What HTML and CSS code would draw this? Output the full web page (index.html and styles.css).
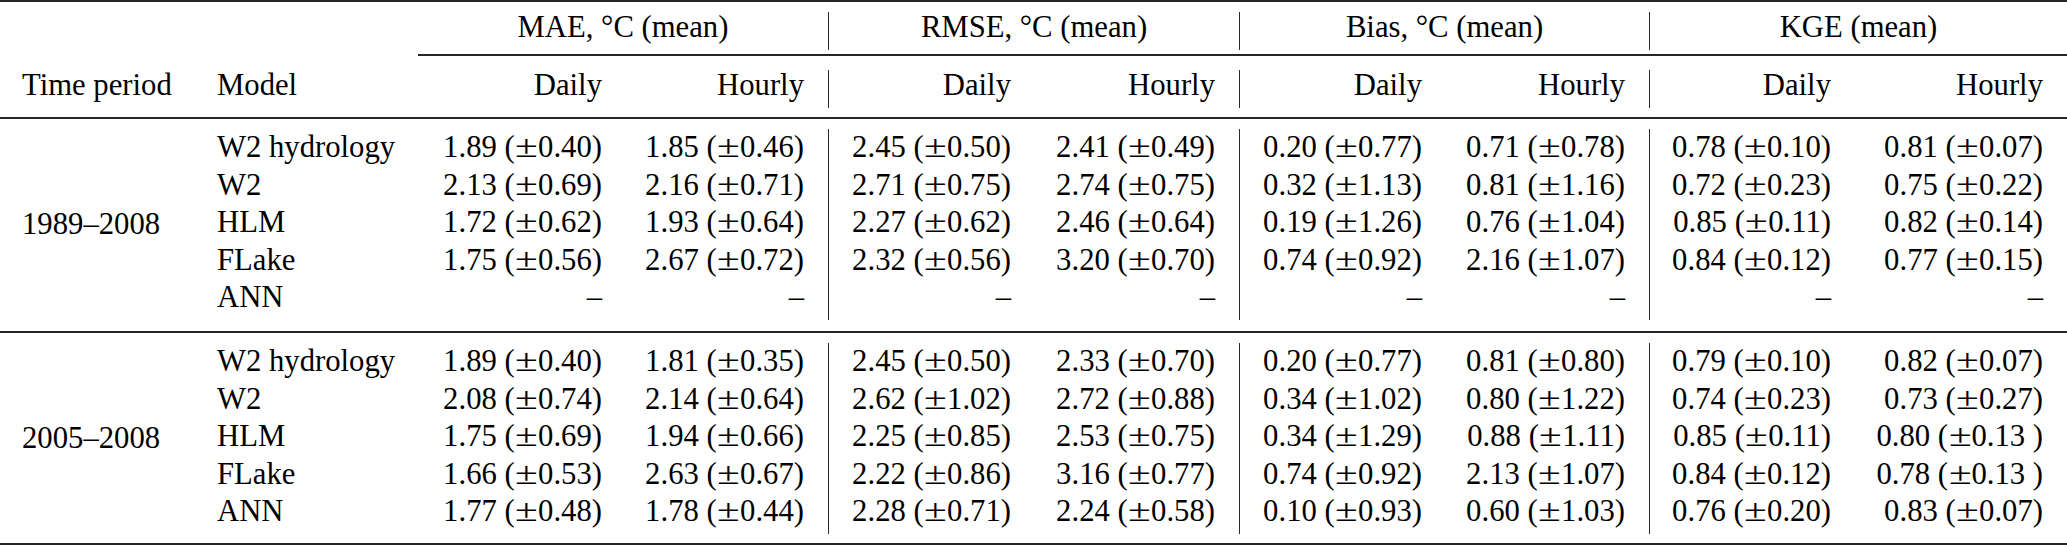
FILE: index.html
```html
<!DOCTYPE html>
<html lang="en">
<head>
<meta charset="utf-8">
<title>Model performance table</title>
<link rel="stylesheet" href="styles.css">
</head>
<body>
<div class="tbl">
  <div class="rule rule-top"></div>

  <div class="gh gh-blank"></div>
  <div class="gh">MAE, °C (mean)</div>
  <div class="gh bar">RMSE, °C (mean)</div>
  <div class="gh bar">Bias, °C (mean)</div>
  <div class="gh bar">KGE (mean)</div>

  <div class="rule rule-group"></div>

  <div class="sh lt">Time period</div>
  <div class="sh lt">Model</div>
  <div class="sh">Daily</div>
  <div class="sh hr">Hourly</div>
  <div class="sh bar">Daily</div>
  <div class="sh hr">Hourly</div>
  <div class="sh bar">Daily</div>
  <div class="sh hr">Hourly</div>
  <div class="sh bar">Daily</div>
  <div class="sh hr">Hourly</div>

  <div class="rule rule-mid"></div>

  <!-- Block 1 -->
  <div class="period">1989–2008</div>
  <div class="c lt">W2 hydrology</div>
  <div class="c">1.89 (<span class="pm">±</span>0.40)</div>
  <div class="c hr">1.85 (<span class="pm">±</span>0.46)</div>
  <div class="c bar">2.45 (<span class="pm">±</span>0.50)</div>
  <div class="c hr">2.41 (<span class="pm">±</span>0.49)</div>
  <div class="c bar">0.20 (<span class="pm">±</span>0.77)</div>
  <div class="c hr">0.71 (<span class="pm">±</span>0.78)</div>
  <div class="c bar">0.78 (<span class="pm">±</span>0.10)</div>
  <div class="c hr">0.81 (<span class="pm">±</span>0.07)</div>

  <div class="c lt">W2</div>
  <div class="c">2.13 (<span class="pm">±</span>0.69)</div>
  <div class="c hr">2.16 (<span class="pm">±</span>0.71)</div>
  <div class="c bar">2.71 (<span class="pm">±</span>0.75)</div>
  <div class="c hr">2.74 (<span class="pm">±</span>0.75)</div>
  <div class="c bar">0.32 (<span class="pm">±</span>1.13)</div>
  <div class="c hr">0.81 (<span class="pm">±</span>1.16)</div>
  <div class="c bar">0.72 (<span class="pm">±</span>0.23)</div>
  <div class="c hr">0.75 (<span class="pm">±</span>0.22)</div>

  <div class="c lt">HLM</div>
  <div class="c">1.72 (<span class="pm">±</span>0.62)</div>
  <div class="c hr">1.93 (<span class="pm">±</span>0.64)</div>
  <div class="c bar">2.27 (<span class="pm">±</span>0.62)</div>
  <div class="c hr">2.46 (<span class="pm">±</span>0.64)</div>
  <div class="c bar">0.19 (<span class="pm">±</span>1.26)</div>
  <div class="c hr">0.76 (<span class="pm">±</span>1.04)</div>
  <div class="c bar">0.85 (<span class="pm">±</span>0.11)</div>
  <div class="c hr">0.82 (<span class="pm">±</span>0.14)</div>

  <div class="c lt">FLake</div>
  <div class="c">1.75 (<span class="pm">±</span>0.56)</div>
  <div class="c hr">2.67 (<span class="pm">±</span>0.72)</div>
  <div class="c bar">2.32 (<span class="pm">±</span>0.56)</div>
  <div class="c hr">3.20 (<span class="pm">±</span>0.70)</div>
  <div class="c bar">0.74 (<span class="pm">±</span>0.92)</div>
  <div class="c hr">2.16 (<span class="pm">±</span>1.07)</div>
  <div class="c bar">0.84 (<span class="pm">±</span>0.12)</div>
  <div class="c hr">0.77 (<span class="pm">±</span>0.15)</div>

  <div class="c lt last">ANN</div>
  <div class="c last">–</div>
  <div class="c hr last">–</div>
  <div class="c bar last">–</div>
  <div class="c hr last">–</div>
  <div class="c bar last">–</div>
  <div class="c hr last">–</div>
  <div class="c bar last">–</div>
  <div class="c hr last">–</div>

  <div class="rule rule-sep"></div>

  <!-- Block 2 -->
  <div class="period">2005–2008</div>
  <div class="c lt">W2 hydrology</div>
  <div class="c">1.89 (<span class="pm">±</span>0.40)</div>
  <div class="c hr">1.81 (<span class="pm">±</span>0.35)</div>
  <div class="c bar">2.45 (<span class="pm">±</span>0.50)</div>
  <div class="c hr">2.33 (<span class="pm">±</span>0.70)</div>
  <div class="c bar">0.20 (<span class="pm">±</span>0.77)</div>
  <div class="c hr">0.81 (<span class="pm">±</span>0.80)</div>
  <div class="c bar">0.79 (<span class="pm">±</span>0.10)</div>
  <div class="c hr">0.82 (<span class="pm">±</span>0.07)</div>

  <div class="c lt">W2</div>
  <div class="c">2.08 (<span class="pm">±</span>0.74)</div>
  <div class="c hr">2.14 (<span class="pm">±</span>0.64)</div>
  <div class="c bar">2.62 (<span class="pm">±</span>1.02)</div>
  <div class="c hr">2.72 (<span class="pm">±</span>0.88)</div>
  <div class="c bar">0.34 (<span class="pm">±</span>1.02)</div>
  <div class="c hr">0.80 (<span class="pm">±</span>1.22)</div>
  <div class="c bar">0.74 (<span class="pm">±</span>0.23)</div>
  <div class="c hr">0.73 (<span class="pm">±</span>0.27)</div>

  <div class="c lt">HLM</div>
  <div class="c">1.75 (<span class="pm">±</span>0.69)</div>
  <div class="c hr">1.94 (<span class="pm">±</span>0.66)</div>
  <div class="c bar">2.25 (<span class="pm">±</span>0.85)</div>
  <div class="c hr">2.53 (<span class="pm">±</span>0.75)</div>
  <div class="c bar">0.34 (<span class="pm">±</span>1.29)</div>
  <div class="c hr">0.88 (<span class="pm">±</span>1.11)</div>
  <div class="c bar">0.85 (<span class="pm">±</span>0.11)</div>
  <div class="c hr">0.80 (<span class="pm">±</span>0.13 )</div>

  <div class="c lt">FLake</div>
  <div class="c">1.66 (<span class="pm">±</span>0.53)</div>
  <div class="c hr">2.63 (<span class="pm">±</span>0.67)</div>
  <div class="c bar">2.22 (<span class="pm">±</span>0.86)</div>
  <div class="c hr">3.16 (<span class="pm">±</span>0.77)</div>
  <div class="c bar">0.74 (<span class="pm">±</span>0.92)</div>
  <div class="c hr">2.13 (<span class="pm">±</span>1.07)</div>
  <div class="c bar">0.84 (<span class="pm">±</span>0.12)</div>
  <div class="c hr">0.78 (<span class="pm">±</span>0.13 )</div>

  <div class="c lt last">ANN</div>
  <div class="c last">1.77 (<span class="pm">±</span>0.48)</div>
  <div class="c hr last">1.78 (<span class="pm">±</span>0.44)</div>
  <div class="c bar last">2.28 (<span class="pm">±</span>0.71)</div>
  <div class="c hr last">2.24 (<span class="pm">±</span>0.58)</div>
  <div class="c bar last">0.10 (<span class="pm">±</span>0.93)</div>
  <div class="c hr last">0.60 (<span class="pm">±</span>1.03)</div>
  <div class="c bar last">0.76 (<span class="pm">±</span>0.20)</div>
  <div class="c hr last">0.83 (<span class="pm">±</span>0.07)</div>

  <div class="rule rule-bottom"></div>
</div>
</body>
</html>
```

FILE: styles.css
```css
html, body {
  margin: 0;
  padding: 0;
  background: #ffffff;
}

body {
  font-family: "Liberation Serif", "Times New Roman", serif;
  font-size: 30.7px;
  color: #000000;
}

.tbl {
  display: grid;
  grid-template-columns: 195px 223px 206px 204px 205px 206px 205px 205px 204px 214px;
  width: 2067px;
}

.tbl > div {
  box-sizing: border-box;
  white-space: nowrap;
}

/* horizontal rules */
.rule {
  grid-column: 1 / -1;
  height: 2px;
  background: #262626;
}

.rule-top {
  margin-bottom: 10px;
}

.rule-group {
  grid-column: 3 / -1;
  margin-top: 4px;
  margin-bottom: 14px;
}

.rule-mid {
  margin-top: 9px;
  margin-bottom: 10px;
}

.rule-sep {
  margin-top: 11.5px;
  margin-bottom: 10px;
}

.rule-bottom {
  margin-top: 9.5px;
}

/* vertical separators */
.bar {
  border-left: 1.5px solid #2a2a2a;
}

/* group header */
.gh {
  grid-column: span 2;
  text-align: center;
  line-height: 30px;
  padding-bottom: 8px;
}

/* sub header */
.sh {
  line-height: 30px;
  padding-bottom: 8px;
  text-align: right;
  padding-right: 22px;
}

/* data cells */
.c {
  line-height: 37.5px;
  text-align: right;
  padding-right: 22px;
}

.hr {
  padding-right: 24px;
}

.lt {
  text-align: left;
  padding-left: 22px;
  padding-right: 0;
}

.last {
  padding-bottom: 3px;
}

.period {
  grid-column: 1;
  grid-row: span 5;
  display: flex;
  align-items: center;
  padding-left: 22px;
  line-height: 37.5px;
}

.pm {
  display: inline-block;
  margin: 0 3px 0 3.5px;
  transform: scaleX(1.35);
}
```
